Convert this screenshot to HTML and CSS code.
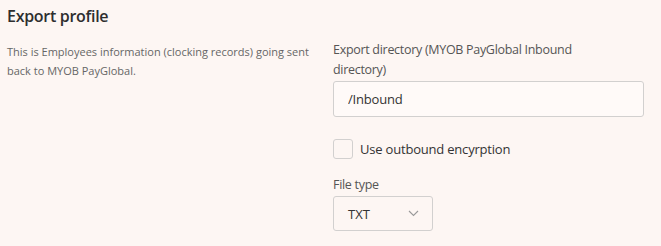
FILE: index.html
```html
<!DOCTYPE html>
<html lang="en">
<head>
    <meta charset="UTF-8">
    <title>Export profile</title>
    <link rel="stylesheet" href="styles.css">
</head>
<body>
    <div class="section">
        <h2 class="sectionTitle">Export profile</h2>
        <div class="sectionBody">
            <p class="sectionHint">This is Employees information (clocking records) going sent back to MYOB PayGlobal.</p>
            <div class="fields">
                <div class="field">
                    <label class="fieldLabel" for="exportDir">Export directory (MYOB PayGlobal Inbound directory)</label>
                    <input class="textInput" id="exportDir" type="text" value="/Inbound">
                </div>
                <label class="checkRow">
                    <span class="checkBox"></span>
                    <span>Use outbound encyrption</span>
                </label>
                <div class="field">
                    <span class="fieldLabel">File type</span>
                    <div class="selectBox">
                        <span>TXT</span>
                        <svg class="chevron" width="11" height="7" viewBox="0 0 11 7"><path d="M1 1l4.5 4.5L10 1" fill="none" stroke="#9a9a9a" stroke-width="1.1"/></svg>
                    </div>
                </div>
            </div>
        </div>
    </div>
</body>
</html>
```

FILE: styles.css
```css
body {
    margin: 0;
    background-color: #fdf6f3;
    font-family: "Open Sans", "Noto Sans", sans-serif;
    color: #333;
}
.section {
    padding: 5px 17px 0 7px;
}
.sectionTitle {
    margin: 0;
    font-size: 16px;
    font-weight: 600;
    line-height: 22px;
    letter-spacing: -0.3px;
    color: #2e2e2e;
}
.sectionBody {
    display: grid;
    grid-template-columns: 326px 1fr;
    margin-top: 15px;
}
.sectionHint {
    margin: 0;
    width: 312px;
    font-size: 11px;
    line-height: 19px;
    color: #666;
}
.fields {
    display: flex;
    flex-direction: column;
    margin-top: -2px;
}
.field {
    display: flex;
    flex-direction: column;
}
.fieldLabel {
    max-width: 270px;
    font-size: 12.5px;
    letter-spacing: -0.3px;
    line-height: 20px;
    color: #555;
    margin-bottom: 1px;
}
.textInput {
    box-sizing: border-box;
    height: 36px;
    padding: 0 14px;
    border: 1px solid #d2d0cf;
    border-radius: 3px;
    background-color: #fffaf8;
    font-family: inherit;
    font-size: 13px;
    letter-spacing: -0.2px;
    color: #333;
}
.checkRow {
    display: flex;
    align-items: center;
    gap: 7px;
    margin-top: 22px;
    font-size: 13px;
    letter-spacing: -0.2px;
    color: #333;
}
.checkBox {
    box-sizing: border-box;
    width: 20px;
    height: 20px;
    border: 1px solid #d2d0cf;
    border-radius: 3px;
}
.checkRow + .field {
    margin-top: 16px;
}
.selectBox {
    box-sizing: border-box;
    display: flex;
    align-items: center;
    justify-content: space-between;
    width: 100px;
    height: 35px;
    padding: 0 13px 0 14px;
    border: 1px solid #d2d0cf;
    border-radius: 3px;
    font-size: 13px;
    color: #333;
}
```
